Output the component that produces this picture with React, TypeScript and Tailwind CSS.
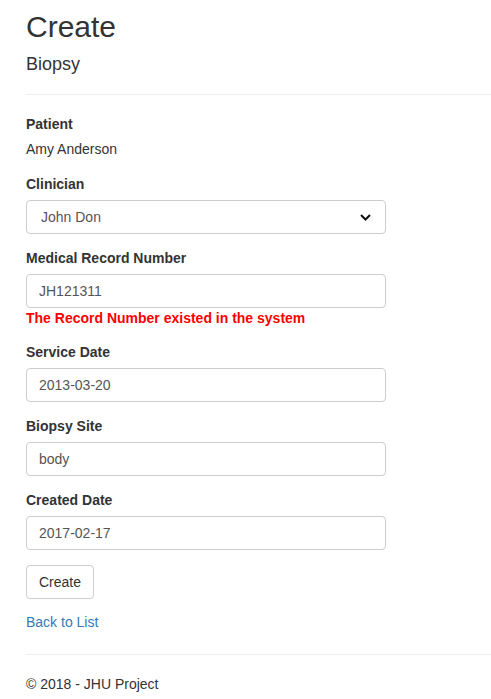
import React from 'react';

// Simple field used by the biopsy form
interface FieldProps {
    label: string;
    value: string;
    error?: string;
}

const Field: React.FC<FieldProps> = ({ label, value, error }) => {
    return (
        <div className="mb-[14px]">
            <div className="font-bold leading-5 mb-[6px]">{label}</div>
            <div className="w-[360px] h-[34px] border border-[#ccc] rounded-[4px] px-3 flex items-center text-[#555]">
                {value}
            </div>
            {error && <div className="font-bold leading-5 text-[#ff0000]">{error}</div>}
        </div>
    );
};

const App: React.FC = () => {
    return (
        <div
            className="w-[491px] h-[699px] overflow-hidden bg-white text-[#333] text-[14px] pl-[26px]"
            style={{ fontFamily: '"Liberation Sans", Arial, Helvetica, sans-serif' }}
        >
            <h2 className="mt-[10px] text-[30px] leading-[33px]">Create</h2>
            <h4 className="mt-[11px] text-[18px] leading-5">Biopsy</h4>
            <div className="mt-[20px] border-t border-[#eee]" />

            <div className="mt-[19px] mb-[15px]">
                <div className="font-bold leading-5 mb-[5px]">Patient</div>
                <div className="leading-5">Amy Anderson</div>
            </div>

            <div className="mb-[14px]">
                <div className="font-bold leading-5 mb-[6px]">Clinician</div>
                <div className="w-[360px] h-[34px] border border-[#ccc] rounded-[4px] pl-[14px] pr-[14px] flex items-center justify-between text-[#555]">
                    <span>John Don</span>
                    <svg width="11" height="7" viewBox="0 0 11 7" fill="none">
                        <path d="M1 1l4.5 4.5L10 1" stroke="#111" strokeWidth="2" />
                    </svg>
                </div>
            </div>

            <Field label="Medical Record Number" value="JH121311" error="The Record Number existed in the system" />
            <Field label="Service Date" value="2013-03-20" />
            <Field label="Biopsy Site" value="body" />
            <Field label="Created Date" value="2017-02-17" />

            <button className="mt-[1px] h-[34px] px-3 border border-[#ccc] rounded-[4px] bg-white leading-5">Create</button>

            <div className="mt-[13px] leading-5">
                <a className="text-[#337ab7]" href="#">Back to List</a>
            </div>

            <div className="mt-[22px] border-t border-[#eee]" />
            <div className="mt-[19px] leading-5">© 2018 - JHU Project</div>
        </div>
    );
};

export default App;
